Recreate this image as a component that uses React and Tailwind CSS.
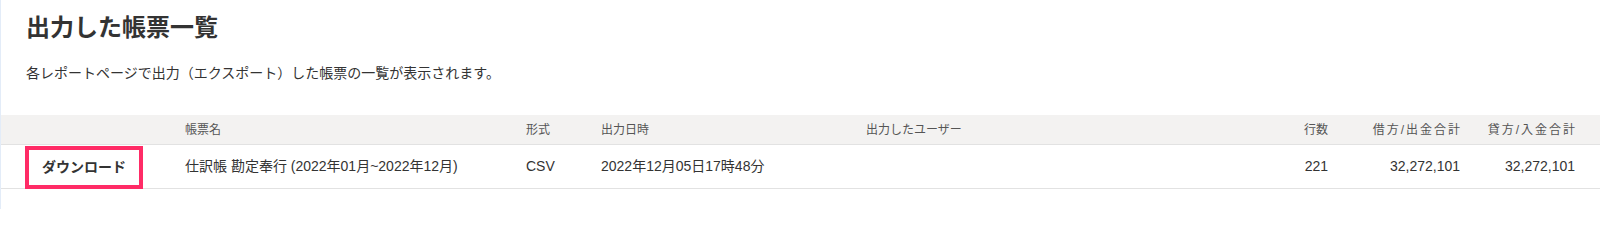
export default function App() {
  const font = { fontFamily: '"Liberation Sans", "Noto Sans CJK JP", sans-serif' };
  return (
    <div className="w-[1600px] h-[209px] bg-white border-l border-[#e3ecf8] text-[#333]" style={font}>
      <div className="pl-[25px] pt-[12px]">
        <h1 className="text-[24px] leading-[32px] font-bold text-[#333]">出力した帳票一覧</h1>
        <p className="mt-[19px] text-[14px] leading-[20px] text-[#333]">各レポートページで出力（エクスポート）した帳票の一覧が表示されます。</p>
      </div>
      <div className="mt-[32px]">
        <div className="flex items-center h-[30px] bg-[#f3f2f1] border-b border-[#e2e2e2] text-[12px] text-[#555]">
          <div className="w-[184px] shrink-0"></div>
          <div className="w-[341px] shrink-0">帳票名</div>
          <div className="w-[75px] shrink-0">形式</div>
          <div className="w-[265px] shrink-0">出力日時</div>
          <div className="flex-1">出力したユーザー</div>
          <div className="w-[40px] shrink-0 text-right">行数</div>
          <div className="w-[132px] shrink-0 text-right"><span className="tracking-[2px] mr-[-2px]">借方/出金合計</span></div>
          <div className="w-[115px] shrink-0 text-right"><span className="tracking-[2px] mr-[-2px]">貸方/入金合計</span></div>
          <div className="w-[25px] shrink-0"></div>
        </div>
        <div className="flex items-center h-[44px] border-b border-[#e2e2e2] text-[14px] text-[#333]">
          <div className="w-[184px] shrink-0 pl-[24px] flex items-center">
            <div className="w-[118px] h-[43px] mt-[1px] border-[4px] border-[#ff2b66] flex items-center justify-center font-bold text-[14px] text-[#333]">ダウンロード</div>
          </div>
          <div className="w-[341px] shrink-0">仕訳帳 勘定奉行 (2022年01月~2022年12月)</div>
          <div className="w-[75px] shrink-0">CSV</div>
          <div className="w-[265px] shrink-0">2022年12月05日17時48分</div>
          <div className="flex-1"></div>
          <div className="w-[40px] shrink-0 text-right">221</div>
          <div className="w-[132px] shrink-0 text-right">32,272,101</div>
          <div className="w-[115px] shrink-0 text-right">32,272,101</div>
          <div className="w-[25px] shrink-0"></div>
        </div>
      </div>
    </div>
  );
}
